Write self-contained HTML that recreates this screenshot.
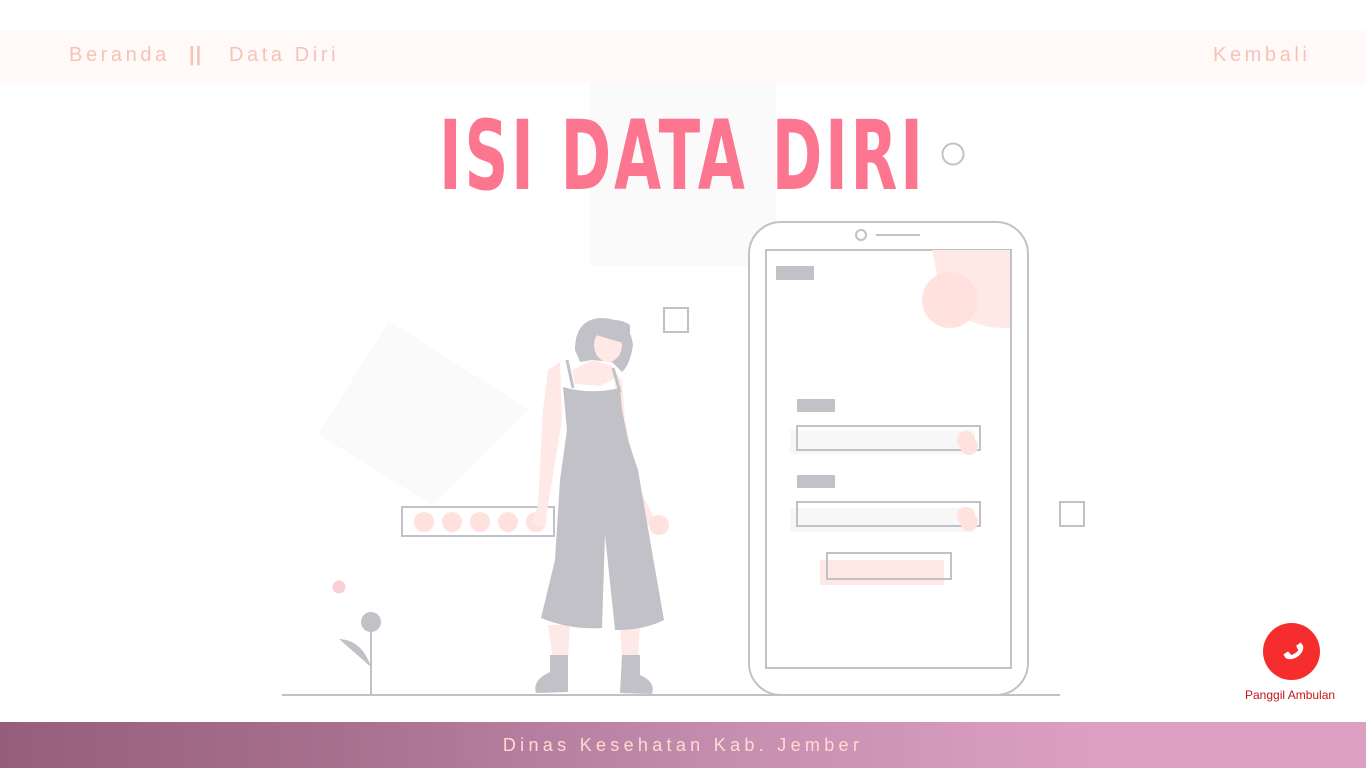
<!DOCTYPE html>
<html><head><meta charset="utf-8"><style>
body{margin:0;width:1366px;height:768px;background:#fff;position:relative;overflow:hidden;font-family:"Liberation Sans",sans-serif}
.nav{position:absolute;top:30px;left:0;width:1366px;height:54px;background:#fffaf8}
.nav span{position:absolute;top:14px;font-size:20px;letter-spacing:3.6px;color:#f6c2b6}
.title{position:absolute;left:439px;top:108px;width:500px;font-family:"DejaVu Sans Condensed","Liberation Sans Narrow",sans-serif;font-weight:bold;font-size:96px;color:#fd7690;letter-spacing:4px;transform:scaleX(0.705);transform-origin:left top;white-space:nowrap;line-height:1}
.foot{position:absolute;left:0;top:722px;width:1366px;height:46px;background:linear-gradient(90deg,#965e7c 0%,#a8708f 25%,#c78fb0 55%,#dc9fc2 80%,#dc9fc2 100%);color:#fbdcd3;text-align:center;font-size:18px;letter-spacing:4.3px;line-height:46px}
.call{position:absolute;left:1263px;top:623px;width:57px;height:57px;border-radius:50%;background:#f62d2d}
.calltxt{position:absolute;left:1245px;top:688px;font-size:12px;color:#c4161c}
</style></head><body>
<svg width="1366" height="768" style="position:absolute;left:0;top:0">
<rect x="590" y="80" width="186" height="186" fill="#fafafa"/>
<polygon points="389,321 529,410 432,505 318,434" fill="#fafafa"/>
<circle cx="953" cy="154" r="10.5" fill="none" stroke="#c2c1c7" stroke-width="2"/>
<rect x="664" y="308" width="24" height="24" fill="none" stroke="#c2c1c7" stroke-width="2"/>
<rect x="1060" y="502" width="24" height="24" fill="none" stroke="#c2c1c7" stroke-width="2"/>
<line x1="282" y1="695" x2="1060" y2="695" stroke="#c2c1c7" stroke-width="2"/>
<rect x="749" y="222" width="279" height="473" rx="32" fill="#fff" stroke="#c2c1c7" stroke-width="2"/>
<rect x="766" y="250" width="245" height="418" fill="#fff" stroke="#c2c1c7" stroke-width="2"/>
<path d="M932 250 L1010 250 L1010 328 Q960 330 940 290 Z" fill="#ffe9e6"/>
<circle cx="950" cy="300" r="28" fill="#ffe2de"/>
<circle cx="861" cy="235" r="5" fill="none" stroke="#c2c1c7" stroke-width="2"/>
<line x1="876" y1="235" x2="920" y2="235" stroke="#c2c1c7" stroke-width="2"/>
<rect x="776" y="266" width="38" height="14" fill="#c2c1c7"/>
<rect x="797" y="399" width="38" height="13" fill="#c2c1c7"/>
<rect x="790" y="430" width="185" height="24" fill="#f7f7f7"/>
<rect x="797" y="426" width="183" height="24" fill="none" stroke="#c2c1c7" stroke-width="2"/>
<circle cx="966" cy="440" r="9" fill="#ffe2de"/><circle cx="969" cy="446" r="9" fill="#ffe2de"/>
<rect x="797" y="475" width="38" height="13" fill="#c2c1c7"/>
<rect x="790" y="508" width="185" height="24" fill="#f7f7f7"/>
<rect x="797" y="502" width="183" height="24" fill="none" stroke="#c2c1c7" stroke-width="2"/>
<circle cx="966" cy="516" r="9" fill="#ffe2de"/><circle cx="969" cy="522" r="9" fill="#ffe2de"/>
<rect x="820" y="560" width="124" height="25" fill="#ffe9e6"/>
<rect x="827" y="553" width="124" height="26" fill="none" stroke="#c2c1c7" stroke-width="2"/>
<rect x="402" y="507" width="152" height="29" fill="none" stroke="#c2c1c7" stroke-width="2"/>
<g fill="#ffe2de"><circle cx="424" cy="522" r="10"/><circle cx="452" cy="522" r="10"/><circle cx="480" cy="522" r="10"/><circle cx="508" cy="522" r="10"/><circle cx="536" cy="522" r="10"/></g>
<circle cx="339" cy="587" r="6.5" fill="#fbcfd6"/>
<circle cx="371" cy="622" r="10" fill="#c2c1c7"/>
<line x1="371" y1="622" x2="371" y2="695" stroke="#c2c1c7" stroke-width="2"/>
<path d="M339 639 Q362 640 371 667 Z" fill="#c2c1c7"/>
<g>
<path d="M560 362 L548 370 L543 410 L538 505 L532 525 L545 528 L548 505 L562 420 Z" fill="#ffe9e6"/>
<path d="M615 372 L622 380 L625 420 L640 490 L655 520 L650 528 L634 500 L615 440 Z" fill="#ffe9e6"/>
<circle cx="659" cy="525" r="10" fill="#ffe2de"/>
<path d="M548 625 L553 660 L568 660 L570 625 Z M620 625 L622 660 L638 660 L640 625 Z" fill="#ffe9e6"/>
<path d="M575 350 Q575 320 600 318 Q630 318 633 345 Q630 365 622 372 L612 362 L592 360 L580 362 Z" fill="#c2c1c7"/>
<ellipse cx="608" cy="345" rx="14" ry="17" fill="#ffe9e6"/>
<path d="M596 335 L630 345 L630 325 Q615 315 600 325 Z" fill="#c2c1c7"/>
<path d="M593 360 L612 366 L616 378 L600 386 L575 384 L572 370 Z" fill="#ffe9e6"/>
<line x1="567" y1="360" x2="573" y2="388" stroke="#c2c1c7" stroke-width="3"/>
<line x1="613" y1="368" x2="620" y2="392" stroke="#c2c1c7" stroke-width="3"/>
<path d="M563 387 Q590 395 620 388 L622 410 L628 440 L638 470 L650 540 L664 620 Q645 630 615 630 L605 535 L602 628 Q570 630 541 618 L555 560 L560 480 L567 430 Z" fill="#c2c1c7"/>
<path d="M550 655 L568 655 L568 692 L536 693 Q532 680 550 672 Z M622 655 L640 655 L640 675 Q656 682 652 694 L620 693 Z" fill="#c2c1c7"/>
</g>
</svg>
<div class="nav"><span style="left:69px">Beranda</span><span style="left:189px;font-weight:bold;letter-spacing:1px">||</span><span style="left:229px">Data Diri</span><span style="left:1213px">Kembali</span></div>
<div class="title">ISI DATA DIRI</div>
<div class="call"><svg width="57" height="57" viewBox="0 0 57 57"><path d="M24 21 L28 25 L25 29 Q27 33 31 35 L35 32 L39 36 L36 39 Q30 41 24 35 Q19 29 21 24 Z" fill="#fff" transform="rotate(-80 28.5 28.5)"/></svg></div>
<div class="calltxt">Panggil Ambulan</div>
<div class="foot">Dinas Kesehatan Kab. Jember</div>
</body></html>
